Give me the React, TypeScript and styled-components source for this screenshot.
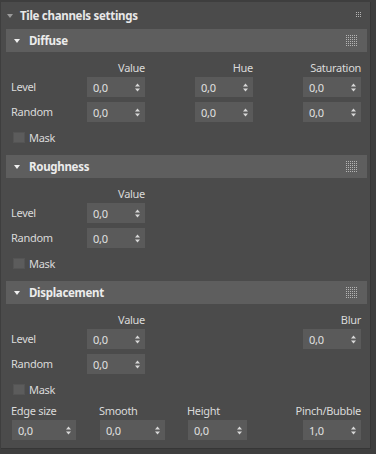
import React from 'react'
import styled, { createGlobalStyle } from 'styled-components'

const GlobalStyle = createGlobalStyle`
  body {
    margin: 0;
    background: #3e3e3e;
    font-family: 'Noto Sans', 'Liberation Sans', sans-serif;
    font-size: 11px;
    letter-spacing: -0.3px;
    color: #dadada;
  }
`

function Caret(props: { light?: boolean }) {
  return (
    <CaretSvg width="6" height="4" viewBox="0 0 6 4">
      <path d="M0 0 L6 0 L3 4 Z" fill={props.light ? '#f0f0f0' : '#9a9a9a'} />
    </CaretSvg>
  )
}

function Grip(props: { n: number }) {
  const dots = []
  for (let i = 0; i < props.n; i++) {
    for (let j = 0; j < props.n; j++) {
      dots.push(<rect key={`${i}-${j}`} x={i * 2} y={j * 2} width="1" height="1" fill="#b4b4b4" />)
    }
  }
  return (
    <svg width={props.n * 2} height={props.n * 2} viewBox={`0 0 ${props.n * 2} ${props.n * 2}`}>
      {dots}
    </svg>
  )
}

function Spinner(props: { value?: string; width?: number }) {
  return (
    <SpinBox $width={props.width ?? 58}>
      <span>{props.value ?? '0,0'}</span>
      <svg width="5" height="9" viewBox="0 0 5 9">
        <path d="M0 3.5 L2.5 0.5 L5 3.5 Z M0 5.5 L2.5 8.5 L5 5.5 Z" fill="#d8d8d8" />
      </svg>
    </SpinBox>
  )
}

function Mask() {
  return (
    <MaskRow>
      <Check />
      <span>Mask</span>
    </MaskRow>
  )
}

function Section(props: { title: string; children: React.ReactNode }) {
  return (
    <div>
      <Band>
        <Caret light />
        <BandTitle>{props.title}</BandTitle>
        <Grip n={6} />
      </Band>
      {props.children}
    </div>
  )
}

export default function App() {
  return (
    <>
      <GlobalStyle />
      <Panel>
        <Header>
          <Caret />
          <HeaderTitle>Tile channels settings</HeaderTitle>
          <Grip n={3} />
        </Header>

        <Section title="Diffuse">
          <Fields>
            <ColHead $col={2}>Value</ColHead>
            <ColHead $col={4}>Hue</ColHead>
            <ColHead $col={6}>Saturation</ColHead>
            <RowLabel $row={2}>Level</RowLabel>
            <Cell $row={2} $col={2}><Spinner /></Cell>
            <Cell $row={2} $col={4}><Spinner /></Cell>
            <Cell $row={2} $col={6}><Spinner /></Cell>
            <RowLabel $row={3}>Random</RowLabel>
            <Cell $row={3} $col={2}><Spinner /></Cell>
            <Cell $row={3} $col={4}><Spinner /></Cell>
            <Cell $row={3} $col={6}><Spinner /></Cell>
            <Mask />
          </Fields>
        </Section>

        <Section title="Roughness">
          <Fields>
            <ColHead $col={2}>Value</ColHead>
            <RowLabel $row={2}>Level</RowLabel>
            <Cell $row={2} $col={2}><Spinner /></Cell>
            <RowLabel $row={3}>Random</RowLabel>
            <Cell $row={3} $col={2}><Spinner /></Cell>
            <Mask />
          </Fields>
        </Section>

        <Section title="Displacement">
          <Fields $last>
            <ColHead $col={2}>Value</ColHead>
            <ColHead $col={6}>Blur</ColHead>
            <RowLabel $row={2}>Level</RowLabel>
            <Cell $row={2} $col={2}><Spinner /></Cell>
            <Cell $row={2} $col={6}><Spinner /></Cell>
            <RowLabel $row={3}>Random</RowLabel>
            <Cell $row={3} $col={2}><Spinner /></Cell>
            <Mask />
          </Fields>
          <BottomGrid>
            <BottomLabel>Edge size</BottomLabel>
            <BottomLabel>Smooth</BottomLabel>
            <BottomLabel>Height</BottomLabel>
            <BottomLabel $right>Pinch/Bubble</BottomLabel>
            <Spinner width={64} />
            <Spinner width={65} />
            <Spinner width={59} />
            <Spinner width={58} value="1,0" />
          </BottomGrid>
        </Section>
      </Panel>
    </>
  )
}

const Panel = styled.div`
  margin: 2px 5px 0 1px;
  height: 447px;
  box-sizing: border-box;
  background: #4b4b4b;
  border-right: 1px solid #363636;
  border-bottom: 1px solid #363636;
  padding: 0 3px 0 5px;
`
const CaretSvg = styled.svg`
  flex: none;
`
const Header = styled.div`
  height: 27px;
  display: flex;
  align-items: center;
  padding: 0 5px 0 1px;
  gap: 7px;
  & > svg:last-child {
    margin-left: auto;
    margin-top: -2px;
  }
`
const HeaderTitle = styled.span`
  font-weight: 700;
  font-size: 11.5px;
  color: #e8e8e8;
`
const Band = styled.div`
  height: 23px;
  display: flex;
  align-items: center;
  background: #5e5e5e;
  padding: 0 9px 0 8px;
  gap: 9px;
  & > svg:last-child {
    margin-left: auto;
  }
`
const BandTitle = styled.span`
  font-weight: 700;
  font-size: 11.5px;
  color: #ececec;
`
const Fields = styled.div<{ $last?: boolean }>`
  display: grid;
  grid-template-columns: 76px 58px 50px 58px 50px 58px;
  grid-template-rows: 17px 25px 25px 18px;
  padding: 8px 0 ${(p) => (p.$last ? 6 : 10)}px 5px;
`
const ColHead = styled.div<{ $col: number }>`
  grid-row: 1;
  grid-column: ${(p) => p.$col};
  justify-self: end;
  line-height: 15px;
  white-space: nowrap;
`
const RowLabel = styled.div<{ $row: number }>`
  grid-row: ${(p) => p.$row};
  grid-column: 1;
  line-height: 20px;
`
const Cell = styled.div<{ $row: number; $col: number }>`
  grid-row: ${(p) => p.$row};
  grid-column: ${(p) => p.$col};
`
const SpinBox = styled.div<{ $width: number }>`
  width: ${(p) => p.$width}px;
  height: 20px;
  box-sizing: border-box;
  background: #5a5a5a;
  display: flex;
  align-items: center;
  justify-content: space-between;
  padding: 0 5px 0 6px;
  color: #e0e0e0;
`
const MaskRow = styled.div`
  grid-row: 4;
  grid-column: 1 / span 3;
  display: flex;
  align-items: center;
  gap: 4px;
  padding: 3px 0 0 2px;
`
const Check = styled.div`
  width: 12px;
  height: 11px;
  background: #5c5c5c;
  border: 1px solid #545454;
  box-sizing: border-box;
`
const BottomGrid = styled.div`
  display: grid;
  grid-template-columns: 88px 88px 115px 58px;
  grid-template-rows: 17px 20px;
  padding: 0 0 0 6px;
`
const BottomLabel = styled.div<{ $right?: boolean }>`
  line-height: 15px;
  justify-self: ${(p) => (p.$right ? 'end' : 'start')};
  margin-left: ${(p) => (p.$right ? 0 : -1)}px;
  white-space: nowrap;
`
